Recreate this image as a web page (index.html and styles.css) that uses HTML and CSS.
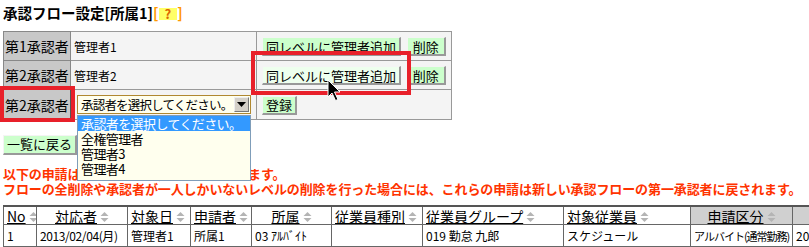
FILE: index.html
```html
<!DOCTYPE html>
<html>
<head>
  <meta charset="utf-8">
  <link rel="stylesheet" href="styles.css">
</head>
<body>
  <div class="page">
    <div class="title">承認フロー設定[所属1]<span class="help">[<span class="help-q">?</span>]</span></div>

    <table class="flow">
      <tr>
        <th>第1承認者</th>
        <td class="name">管理者1</td>
        <td class="ops">
          <button class="btn">同レベルに管理者追加</button>
          <button class="btn btn-del">削除</button>
        </td>
      </tr>
      <tr>
        <th>第2承認者</th>
        <td class="name">管理者2</td>
        <td class="ops">
          <button class="btn btn-hover">同レベルに管理者追加</button>
          <button class="btn btn-del">削除</button>
        </td>
      </tr>
      <tr>
        <th class="current">第2承認者</th>
        <td class="name">
          <div class="select">
            <span class="select-text">承認者を選択してください。</span>
            <span class="select-arrow"><svg width="9" height="5" viewBox="0 0 9 5"><path d="M0 0H9L4.5 5Z" fill="#000"/></svg></span>
          </div>
        </td>
        <td class="ops">
          <button class="btn">登録</button>
        </td>
      </tr>
    </table>

    <div class="back-row">
      <button class="btn">一覧に戻る</button>
    </div>

    <div class="notice">
      <div>以下の申請は承認フロー変更の影響を受けます。</div>
      <div>フローの全削除や承認者が一人しかいないレベルの削除を行った場合には、これらの申請は新しい承認フローの第一承認者に戻されます。</div>
    </div>

    <table class="list">
      <colgroup>
        <col style="width: 33px">
        <col style="width: 91px">
        <col style="width: 63px">
        <col style="width: 61px">
        <col style="width: 80px">
        <col style="width: 91px">
        <col style="width: 141px">
        <col style="width: 127px">
        <col style="width: 102px">
        <col style="width: 60px">
      </colgroup>
      <tr>
        <th class="left"><a>No</a><svg class="sort" width="9" height="12" viewBox="0 0 9 12"><path d="M0.5 5L4.5 1L8.5 5Z M0.5 7H8.5L4.5 11Z" fill="#b4b4b4"/></svg></th>
        <th><a>対応者</a><svg class="sort" width="9" height="12" viewBox="0 0 9 12"><path d="M0.5 5L4.5 1L8.5 5Z M0.5 7H8.5L4.5 11Z" fill="#b4b4b4"/></svg></th>
        <th class="left"><a>対象日</a><svg class="sort" width="9" height="12" viewBox="0 0 9 12"><path d="M0.5 5L4.5 1L8.5 5Z M0.5 7H8.5L4.5 11Z" fill="#b4b4b4"/></svg></th>
        <th class="left"><a>申請者</a><svg class="sort" width="9" height="12" viewBox="0 0 9 12"><path d="M0.5 5L4.5 1L8.5 5Z M0.5 7H8.5L4.5 11Z" fill="#b4b4b4"/></svg></th>
        <th><a>所属</a><svg class="sort" width="9" height="12" viewBox="0 0 9 12"><path d="M0.5 5L4.5 1L8.5 5Z M0.5 7H8.5L4.5 11Z" fill="#b4b4b4"/></svg></th>
        <th class="left"><a>従業員種別</a><svg class="sort" width="9" height="12" viewBox="0 0 9 12"><path d="M0.5 5L4.5 1L8.5 5Z M0.5 7H8.5L4.5 11Z" fill="#b4b4b4"/></svg></th>
        <th class="left"><a>従業員グループ</a><svg class="sort" width="9" height="12" viewBox="0 0 9 12"><path d="M0.5 5L4.5 1L8.5 5Z M0.5 7H8.5L4.5 11Z" fill="#b4b4b4"/></svg></th>
        <th class="left"><a>対象従業員</a><svg class="sort" width="9" height="12" viewBox="0 0 9 12"><path d="M0.5 5L4.5 1L8.5 5Z M0.5 7H8.5L4.5 11Z" fill="#b4b4b4"/></svg></th>
        <th class="dim"><a>申請区分</a><svg class="sort" width="9" height="12" viewBox="0 0 9 12"><path d="M0.5 5L4.5 1L8.5 5Z M0.5 7H8.5L4.5 11Z" fill="#b4b4b4"/></svg></th>
        <th class="dim"></th>
      </tr>
      <tr>
        <td>1</td>
        <td class="num">2013/02/04(月)</td>
        <td>管理者1</td>
        <td>所属1</td>
        <td>03 ｱﾙﾊﾞｲﾄ</td>
        <td></td>
        <td>019 勤怠 九郎</td>
        <td>スケジュール</td>
        <td class="tight">アルバイト(通常勤務)</td>
        <td>20</td>
      </tr>
    </table>

    <!-- overlays: open dropdown, annotation boxes, mouse pointer -->
    <div class="dropdown">
      <div class="dropdown-item selected">承認者を選択してください。</div>
      <div class="dropdown-item">全権管理者</div>
      <div class="dropdown-item">管理者3</div>
      <div class="dropdown-item">管理者4</div>
    </div>

    <div class="mark mark-label"></div>
    <div class="mark mark-button"></div>

    <svg class="pointer" width="14" height="23" viewBox="0 0 14 23">
      <path d="M1 1V18L5 14L8.5 21.5L11 20.5L7.5 13H13Z" fill="#000" stroke="#fff" stroke-width="1"/>
    </svg>
  </div>
</body>
</html>
```

FILE: styles.css
```css
html, body {
  margin: 0;
  padding: 0;
  overflow: hidden;
  background: white;
}
.page {
  position: relative;
  padding: 4px 3px 0;
  font-family: "Noto Sans CJK JP", sans-serif;
  font-size: 12px;
  color: #000;
}
.title {
  font-weight: bold;
  font-size: 14.5px;
  line-height: 17px;
  height: 17px;
  margin-bottom: 10px;
}
.help {
  color: #ff9900;
}
.help-q {
  display: inline-block;
  background: #ffff66;
  color: #dd6600;
  font-size: 13px;
  padding: 0 6px;
  line-height: 12px;
}
.flow {
  border-collapse: collapse;
  border: 1px solid #666;
  width: 449px;
}
.flow th, .flow td {
  height: 28px;
  border: 1px solid #999;
  padding: 0;
  background: #f4f4f4;
  text-align: left;
  white-space: nowrap;
}
.flow tr:last-child th, .flow tr:last-child td {
  height: 29px;
}
.flow th {
  width: 67px;
  background: #c8c8c8;
  border-color: #888;
  font-weight: normal;
  font-size: 14px;
  padding-left: 1px;
  box-sizing: border-box;
}
.flow th.current {
  border: 1px solid #555;
}
.flow .name {
  width: 186px;
  padding-left: 3px;
  box-sizing: border-box;
}
.flow .ops {
  padding-left: 5px;
}
.btn {
  font-family: inherit;
  font-size: 13px;
  line-height: 15px;
  height: 19px;
  padding: 0 3px;
  margin: 0 3px 0 0;
  background: #ccffcc;
  border-style: solid;
  border-width: 1px 2px 2px 1px;
  border-color: #f4f4f4 #999 #999 #f4f4f4;
  color: #000;
  vertical-align: middle;
  cursor: pointer;
}
.btn-del {
  padding: 0 5px;
}
.btn-hover {
  background: #eeffee;
}
.select {
  display: flex;
  align-items: center;
  width: 174px;
  height: 19px;
  margin-left: 3px;
  box-sizing: border-box;
  border: 1px solid #b08830;
  background: #ffffee;
}
.select-text {
  flex: 1;
  padding-left: 3px;
  font-size: 12.5px;
  letter-spacing: -0.8px;
  line-height: 17px;
  white-space: nowrap;
  overflow: hidden;
}
.select-arrow {
  display: flex;
  align-items: center;
  justify-content: center;
  width: 15px;
  height: 15px;
  margin-right: 1px;
  background: #d4d0c8;
  border: 1px solid;
  border-color: #eee #777 #777 #eee;
  box-sizing: border-box;
}
.back-row {
  margin-top: 14px;
  height: 20px;
}
.back-row .btn {
  height: 20px;
  line-height: 16px;
}
.notice {
  margin-top: 12px;
  color: #ff3300;
  font-weight: bold;
  font-size: 13px;
  line-height: 15px;
  letter-spacing: -0.1px;
  white-space: nowrap;
}
.list {
  margin-top: 9px;
  border-collapse: collapse;
  table-layout: fixed;
  width: 849px;
  border-top: 2px solid #555;
}
.list th, .list td {
  border: 1px solid #666;
  padding: 0 3px;
  white-space: nowrap;
  overflow: hidden;
}
.list th {
  height: 17px;
  font-weight: normal;
  font-size: 14px;
  line-height: 16px;
  text-align: center;
  background: #fff;
  padding: 0 2px;
}
.list th.left {
  text-align: left;
  padding-left: 3px;
}
.list th.dim {
  background: #d0d0d0;
}
.list th a {
  text-decoration: underline;
  color: #000;
}
.list td {
  height: 21px;
  font-size: 12px;
  line-height: 16px;
  background: #fff;
}
.list td.num {
  letter-spacing: -0.4px;
}
.list td.tight {
  font-size: 11px;
  letter-spacing: -1px;
}
.sort {
  margin-left: 3px;
  vertical-align: -1px;
}
.dropdown {
  position: absolute;
  left: 77px;
  top: 115px;
  width: 174px;
  box-sizing: border-box;
  border: 1px solid #7f9db9;
  background: #ffffee;
  padding-bottom: 4px;
}
.dropdown-item {
  height: 15px;
  line-height: 15px;
  padding-left: 3px;
  font-size: 13px;
  letter-spacing: -0.6px;
  white-space: nowrap;
}
.dropdown-item.selected {
  background: #3399ff;
  color: #fff;
}
.mark {
  position: absolute;
  border: 4px solid #e8202a;
}
.mark-label {
  left: 0;
  top: 86px;
  width: 67px;
  height: 28px;
}
.mark-button {
  left: 251px;
  top: 51px;
  width: 152px;
  height: 36px;
}
.pointer {
  position: absolute;
  left: 327px;
  top: 79px;
}
```
